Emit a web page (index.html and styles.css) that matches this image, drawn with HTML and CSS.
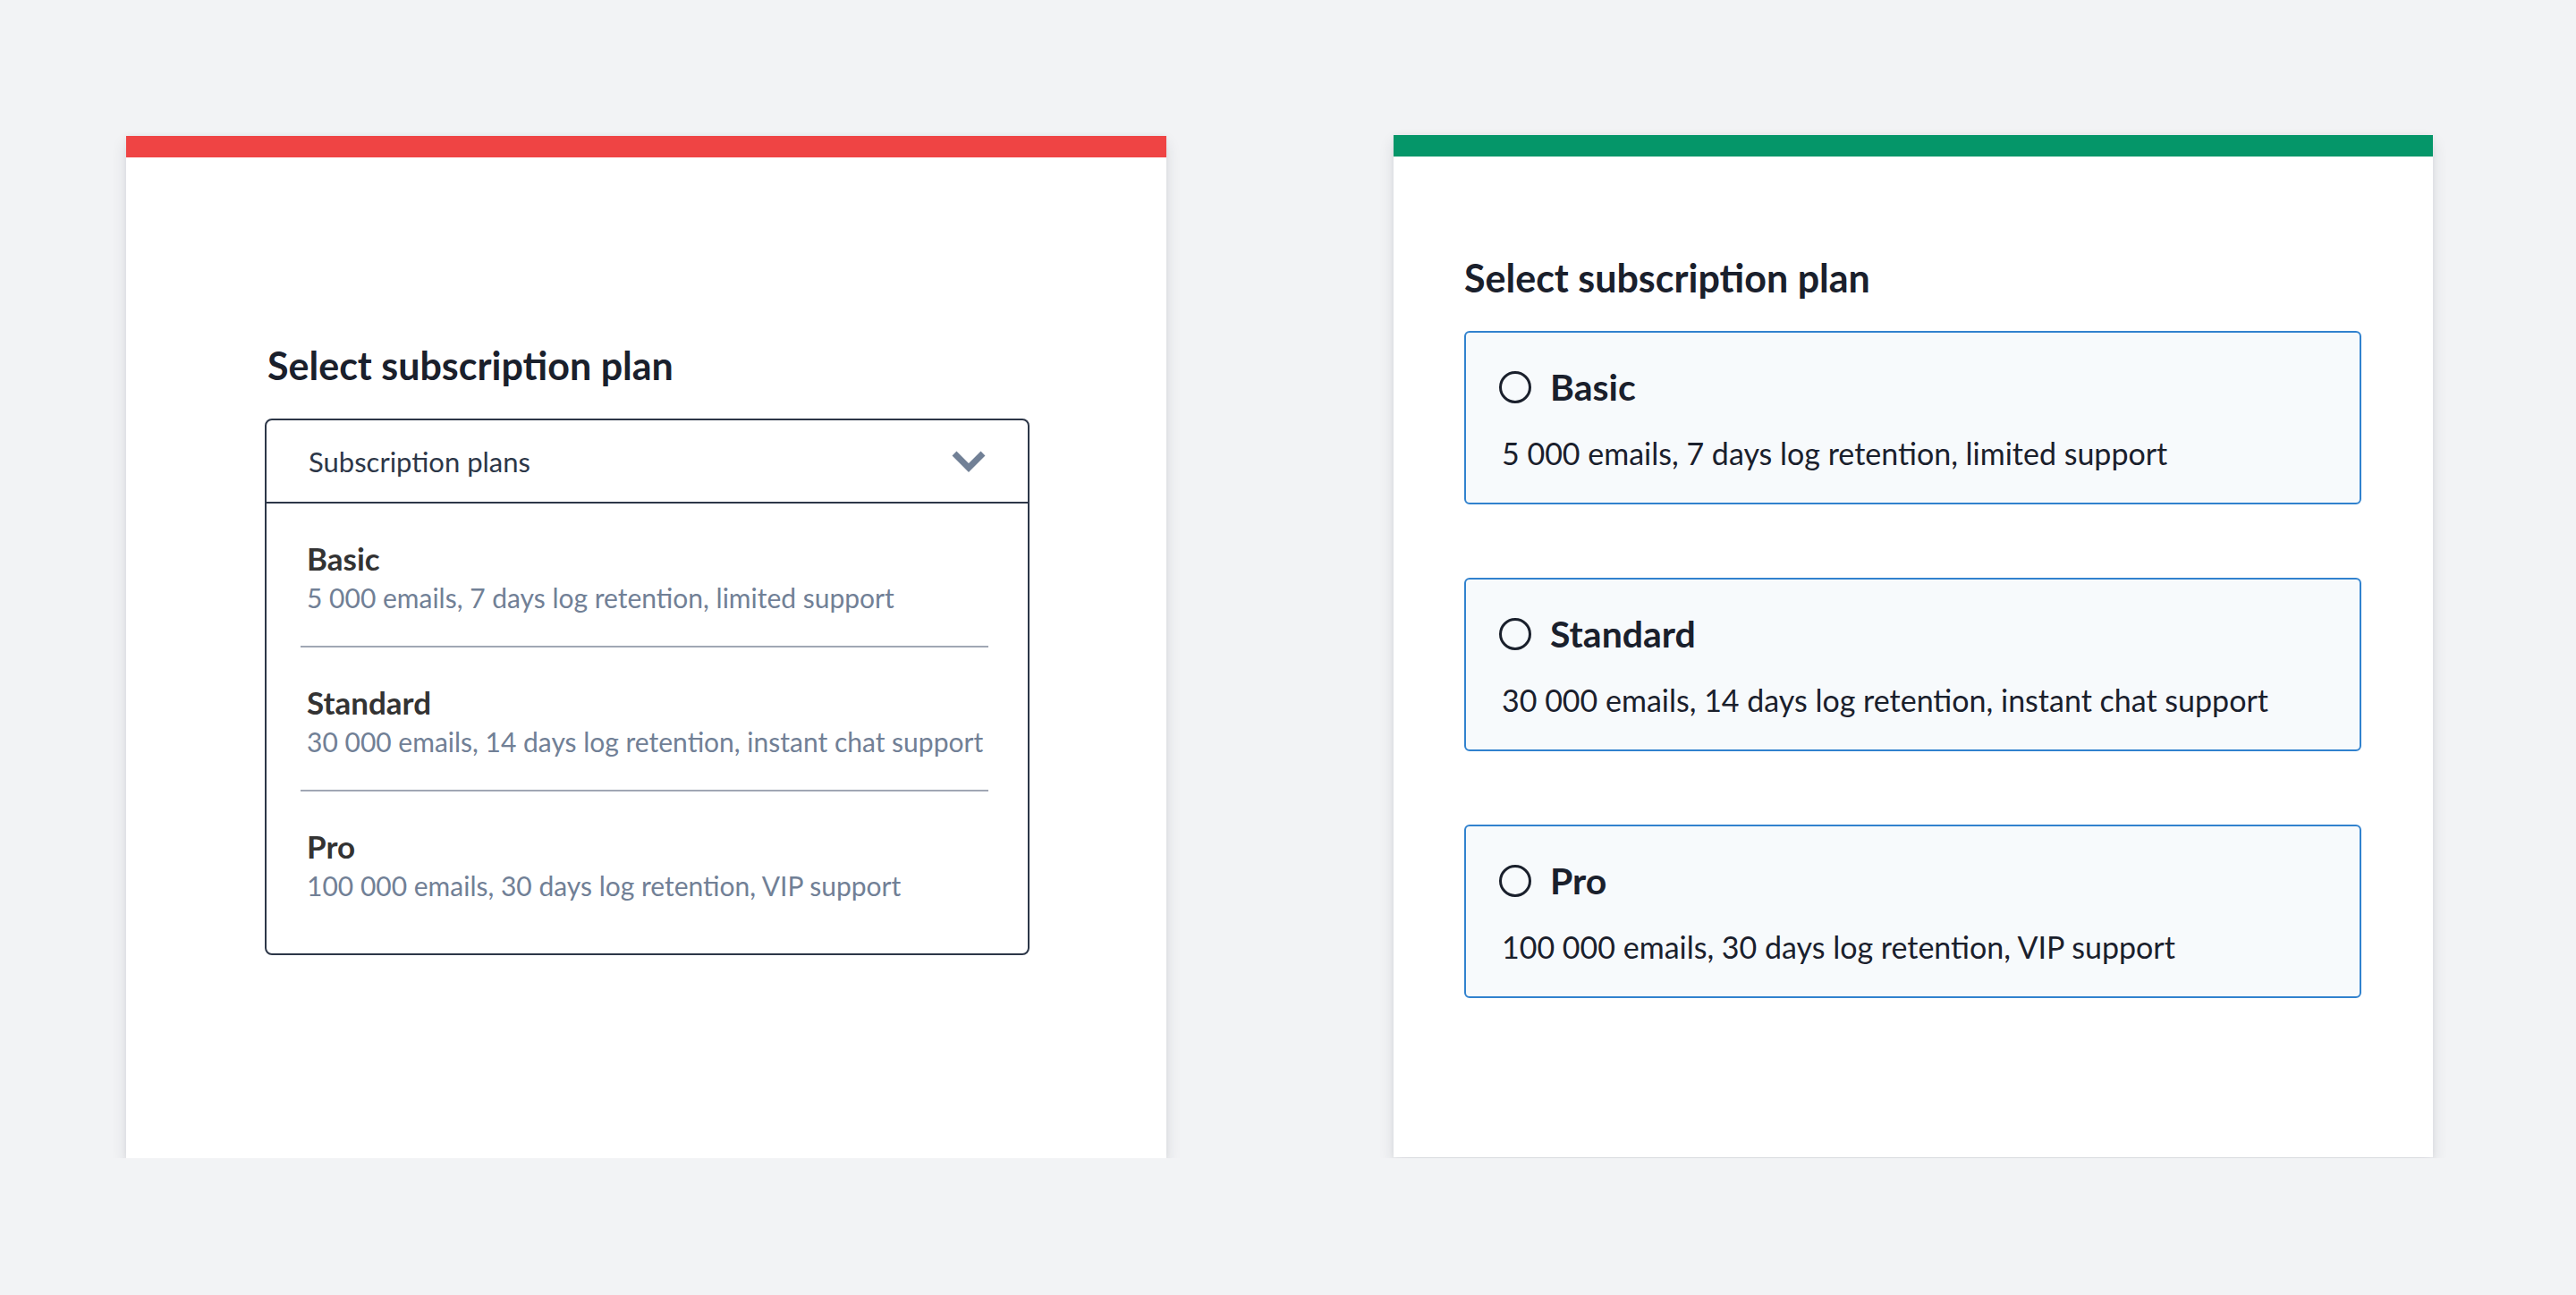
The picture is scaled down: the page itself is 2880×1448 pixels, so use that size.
FILE: index.html
```html
<!DOCTYPE html>
<html>
<head>
  <title>Select subscription plan</title>
  <link rel="stylesheet" href="styles.css">
</head>
<body>

<div class="page">

  <div class="card card-bad">
    <h2 class="title">Select subscription plan</h2>
    <div class="dropdown">
      <div class="dropdown-head">
        <span>Subscription plans</span>
        <svg class="chevron" width="38" height="24" viewBox="0 0 38 24">
          <path d="M3 3 L19 19 L35 3" fill="none" stroke="#718096" stroke-width="7" stroke-linejoin="miter"/>
        </svg>
      </div>
      <div class="dropdown-list">
        <div class="option">
          <div class="option-name">Basic</div>
          <div class="option-desc">5 000 emails, 7 days log retention, limited support</div>
        </div>
        <div class="option">
          <div class="option-name">Standard</div>
          <div class="option-desc">30 000 emails, 14 days log retention, instant chat support</div>
        </div>
        <div class="option">
          <div class="option-name">Pro</div>
          <div class="option-desc">100 000 emails, 30 days log retention, VIP support</div>
        </div>
      </div>
    </div>
  </div>

  <div class="card card-good">
    <h2 class="title">Select subscription plan</h2>
    <label class="plan">
      <div class="plan-head">
        <span class="radio"></span>
        <span class="plan-name">Basic</span>
      </div>
      <div class="plan-desc">5 000 emails, 7 days log retention, limited support</div>
    </label>
    <label class="plan">
      <div class="plan-head">
        <span class="radio"></span>
        <span class="plan-name">Standard</span>
      </div>
      <div class="plan-desc">30 000 emails, 14 days log retention, instant chat support</div>
    </label>
    <label class="plan">
      <div class="plan-head">
        <span class="radio"></span>
        <span class="plan-name">Pro</span>
      </div>
      <div class="plan-desc">100 000 emails, 30 days log retention, VIP support</div>
    </label>
  </div>

</div>

</body>
</html>
```

FILE: styles.css
```css
body {
  margin: 0;
  background: #f2f3f5;
  font-family: "Lato", "Liberation Sans", sans-serif;
  color: #1a202c;
}

.page {
  display: flex;
  align-items: flex-start;
  gap: 254px;
  padding: 151px 0 0 141px;
}

.card {
  box-sizing: border-box;
  height: 1143px;
  background: #fff;
  box-shadow: 0 8px 16px rgba(30, 40, 60, 0.12), 0 0 6px rgba(30, 40, 60, 0.05);
}

.card-bad {
  width: 1163px;
  margin-top: 1px;
  border-top: 24px solid #ef4444;
  padding: 211px 153px 0 155px;
}

.card-bad .title {
  padding-left: 3px;
}

.card-good {
  width: 1162px;
  border-top: 24px solid #059669;
  padding: 114px 80px 0 79px;
}

.title {
  margin: 0 0 38px 0;
  font-size: 43px;
  line-height: 43px;
  font-weight: 700;
  color: #1a202c;
}

/* dropdown (left) */

.dropdown {
  border: 2px solid #2d3748;
  border-radius: 8px;
}

.dropdown-head {
  display: flex;
  align-items: center;
  justify-content: space-between;
  height: 91px;
  padding: 0 47px;
  border-bottom: 2px solid #2d3748;
  font-size: 31px;
  color: #2d3748;
}

.chevron {
  display: block;
}

.dropdown-list {
  padding: 0 44px 22px 38px;
}

.option {
  padding: 41px 7px 30px;
}

.option + .option {
  border-top: 2px solid #a0a7b4;
}

.option-name {
  font-size: 35px;
  line-height: 40px;
  font-weight: 700;
  color: #333;
}

.option-desc {
  font-size: 30px;
  line-height: 48px;
  color: #718096;
  white-space: nowrap;
}

/* radio cards (right) */

.plan {
  display: block;
  box-sizing: border-box;
  height: 194px;
  margin-bottom: 82px;
  padding: 37px 37px 0;
  border: 2px solid #3182ce;
  border-radius: 6px;
  background: #f7fafc;
}

.plan-head {
  display: flex;
  align-items: center;
  height: 48px;
}

.radio {
  box-sizing: border-box;
  width: 36px;
  height: 36px;
  margin-right: 21px;
  border: 3px solid #1a202c;
  border-radius: 50%;
}

.plan-name {
  font-size: 41px;
  line-height: 48px;
  font-weight: 700;
}

.plan-desc {
  margin: 30px 0 0 3px;
  font-size: 34px;
  line-height: 40px;
  white-space: nowrap;
}
```
